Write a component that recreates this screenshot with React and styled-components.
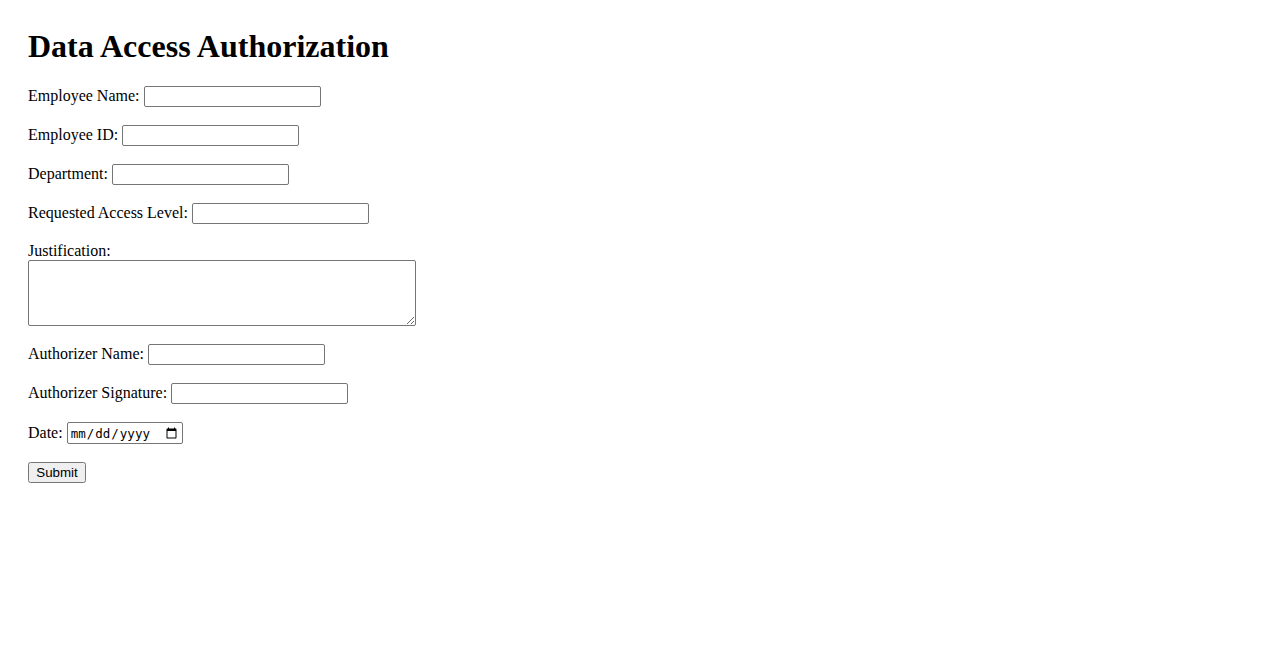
import React from 'react'
import styled, { createGlobalStyle } from 'styled-components'

const GlobalStyle = createGlobalStyle`
  body {
    margin: 8px;
    background: #fff;
    color: #000;
    font-family: "Liberation Serif", "Times New Roman", serif;
    font-size: 16px;
  }
`

const Page = styled.div`
  padding: 20px;
`

const Title = styled.h1`
  margin: 0 0 21px;
  font-size: 32px;
  font-weight: bold;
  line-height: normal;
`

const Form = styled.form`
  display: flex;
  flex-direction: column;
  align-items: flex-start;
  gap: 18px;
`

const Row = styled.div`
  display: flex;
  align-items: ${(p) => (p.$stacked ? 'flex-start' : 'center')};
  flex-direction: ${(p) => (p.$stacked ? 'column' : 'row')};
  gap: ${(p) => (p.$stacked ? '0' : '4px')};
`

const Label = styled.label`
  line-height: normal;
  margin-top: ${(p) => (p.$stacked ? '0' : '-1px')};
`

const TextInput = styled.input`
  box-sizing: border-box;
  width: ${(p) => p.$w || '177px'};
  height: ${(p) => p.$h || '21px'};
  margin: 0;
  border: 1px solid #767676;
  border-radius: 2px;
  padding: 1px 2px;
  font-size: 13.33px;
`

const DateInput = styled(TextInput)`
  font-size: 12.5px;
`

const TextArea = styled.textarea`
  box-sizing: border-box;
  width: 388px;
  height: 66px;
  margin: 0;
  border: 1px solid #767676;
  border-radius: 2px;
  padding: 2px;
`

const SubmitButton = styled.button`
  box-sizing: border-box;
  width: 58px;
  height: 21px;
  padding: 1px 6px;
  font-family: "Liberation Sans", Arial, sans-serif;
  font-size: 13.33px;
`

const fields = [
  ['name', 'Employee Name:'],
  ['id', 'Employee ID:'],
  ['dept', 'Department:'],
  ['level', 'Requested Access Level:'],
]

const fields2 = [
  ['authName', 'Authorizer Name:'],
  ['authSig', 'Authorizer Signature:'],
]

export default function App() {
  return (
    <>
      <GlobalStyle />
      <Page>
        <Title>Data Access Authorization</Title>
        <Form onSubmit={(e) => e.preventDefault()}>
          {fields.map(([id, text]) => (
            <Row key={id}>
              <Label htmlFor={id}>{text}</Label>
              <TextInput id={id} type="text" />
            </Row>
          ))}
          <Row $stacked>
            <Label $stacked htmlFor="just">Justification:</Label>
            <TextArea id="just" />
          </Row>
          {fields2.map(([id, text]) => (
            <Row key={id}>
              <Label htmlFor={id}>{text}</Label>
              <TextInput id={id} type="text" />
            </Row>
          ))}
          <Row>
            <Label htmlFor="date">Date:</Label>
            <DateInput id="date" type="date" $w="116px" $h="22px" />
          </Row>
          <SubmitButton type="submit">Submit</SubmitButton>
        </Form>
      </Page>
    </>
  )
}
